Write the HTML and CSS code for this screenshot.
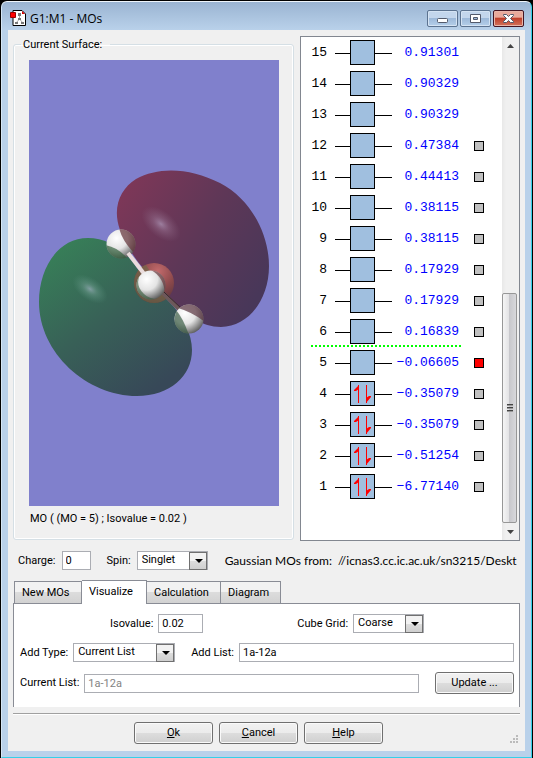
FILE: index.html
```html
<!DOCTYPE html>
<html lang="en">
<head>
<meta charset="UTF-8">
<title>G1:M1 - MOs</title>
<link rel="stylesheet" href="styles.css">
</head>
<body>
<svg class="defs" width="0" height="0">
    <symbol id="empty" viewBox="0 0 57 25">
        <path d="M0 13.5H57" stroke="#000" fill="none"/>
        <rect x="15.5" y="0.5" width="24" height="24" fill="#a0bfdf" stroke="#000"/>
    </symbol>
    <symbol id="filled" viewBox="0 0 57 25">
        <path d="M0 13.5H57" stroke="#000" fill="none"/>
        <rect x="15.5" y="0.5" width="24" height="24" fill="#a0bfdf" stroke="#000"/>
        <path d="M23.5 22V4M31.5 4V22" stroke="#f00" fill="none"/>
        <path d="M24 4V8L21 10H19V9ZM31 22V17L34 15H36V16Z" fill="#f00"/>
    </symbol>
</svg>
<div class="window">
    <header class="titlebar">
        <svg class="app-icon" width="16" height="17" viewBox="0 0 16 17">
            <path d="M3 .5H12L15.500 4V15.500H3Z" fill="#fff" stroke="#000"/>
            <path d="M12 1L15 4H12Z" fill="#d00"/>
            <path d="M9.500 5V9L6 13M9.500 9L13 13" fill="none" stroke="#aaa"/>
            <path d="M8 3h3v3H8zM8 8h3v2H8zM5 12h3v2H5zM11 12h3v2h-3z" fill="#777"/>
            <path d="M.5 2.500H5.500V7.500H.5Z" fill="#f00" stroke="#900"/>
        </svg>
        <h1>G1:M1 - MOs</h1>
        <div class="win-btns">
            <button aria-label="Minimize"><svg width="13" height="11" viewBox="0 0 13 11"><rect x="1.500" y="5.500" width="10" height="4" rx="1" fill="#fff" stroke="#535a6b"/></svg></button>
            <button aria-label="Maximize"><svg width="13" height="11" viewBox="0 0 13 11"><path fill-rule="evenodd" d="M1.500 1.500h10v8h-10zM4.500 4.500v2h4v-2z" fill="#fff" stroke="#535a6b"/></svg></button>
            <button class="close" aria-label="Close"><svg width="13" height="11" viewBox="0 0 13 11"><path d="M1.500 1.500h3l2 2 2-2h3v1l-3 3 3 3v1h-3l-2-2-2 2h-3v-1l3-3-3-3z" fill="#fff" stroke="#535a6b"/></svg></button>
        </div>
    </header>
    <main class="client">
        <div class="top">
            <fieldset class="surface">
                <legend>Current Surface:</legend>
                <svg class="view" viewBox="29 60 250 446" preserveAspectRatio="xMidYMid slice">
                    <defs>
                        <linearGradient id="red" x1="0" y1="0" x2="1" y2="0.7">
                            <stop offset="0" stop-color="#833758"/><stop offset="0.55" stop-color="#5e3757"/><stop offset="1" stop-color="#483759"/>
                        </linearGradient>
                        <linearGradient id="green" x1="0" y1="0" x2="0.7" y2="1">
                            <stop offset="0" stop-color="#378558"/><stop offset="0.55" stop-color="#386057"/><stop offset="1" stop-color="#374858"/>
                        </linearGradient>
                        <radialGradient id="shine"><stop offset="0" stop-color="#a58bab" stop-opacity="0.85"/><stop offset="0.4" stop-color="#94708f" stop-opacity="0.5"/><stop offset="1" stop-color="#84607c" stop-opacity="0"/></radialGradient>
                        <radialGradient id="shine-green"><stop offset="0" stop-color="#8aa3aa" stop-opacity="0.9"/><stop offset="0.4" stop-color="#6c9a8c" stop-opacity="0.5"/><stop offset="1" stop-color="#55907a" stop-opacity="0"/></radialGradient>
                        <radialGradient id="white" cx="0.35" cy="0.3" r="0.75">
                            <stop offset="0" stop-color="#fff"/><stop offset="0.5" stop-color="#e4e4e4"/><stop offset="1" stop-color="#5c5c5c"/>
                        </radialGradient>
                        <radialGradient id="boron" cx="0.6" cy="0.2" r="0.8">
                            <stop offset="0" stop-color="#c26a6c"/><stop offset="0.5" stop-color="#8e4a4c"/><stop offset="1" stop-color="#57353c"/>
                        </radialGradient>
                        <clipPath id="upper"><circle cx="121" cy="244" r="14.500"/></clipPath>
                        <clipPath id="lower"><circle cx="189" cy="319" r="14.500"/></clipPath>
                        <clipPath id="front"><circle cx="151" cy="285" r="14.500"/></clipPath>
                        <clipPath id="middle"><circle cx="154" cy="283" r="20"/></clipPath>
                    </defs>
                    <rect x="-500" y="-500" width="2000" height="2000" fill="#8080cc"/>
                    <path fill="url(#red)" d="M120 230C112 208 120 189 136 179C159 166 191 168 220 183C251 199 269 234 269 266C269 300 248 327 221 327C211 327 203 324 196 320C184 314 173 304 163 292L138 262C131 252 124 242 120 230Z"/>
                    <path fill="url(#green)" d="M88 238C58 238 39 268 39 302C39 353 87 396 137 396C170 396 192 376 192 350C192 334 183 318 174 307L137 268C126 250 108 238 88 238Z"/>
                    <ellipse cx="161" cy="224" rx="23" ry="13" transform="rotate(40 161 224)" fill="url(#shine)"/>
                    <ellipse cx="90" cy="289" rx="20" ry="11" transform="rotate(35 90 289)" fill="url(#shine-green)"/>
                    <circle cx="154" cy="283" r="20" fill="url(#boron)"/>
                    <path clip-path="url(#middle)" d="M130 262H144L172 305L130 308Z" fill="#6e6a48" fill-opacity="0.65"/>
                    <path d="M163 293L182 312" stroke="#6d585a" stroke-width="4"/>
                    <path d="M164 292L183 310" stroke="#36242b"/>
                    <circle cx="121" cy="244" r="14.500" fill="url(#white)"/>
                    <g clip-path="url(#upper)">
                        <path d="M119 228Q122 240 133 252L140 260V225Z" fill="#633238" fill-opacity="0.7"/>
                        <path d="M105 245Q118 247 128 259L120 262H105Z" fill="#295a34" fill-opacity="0.65"/>
                    </g>
                    <circle cx="189" cy="319" r="14.500" fill="url(#white)"/>
                    <g clip-path="url(#lower)">
                        <path d="M178 308Q192 312 205 322V300H178Z" fill="#5a3540" fill-opacity="0.7"/>
                        <path d="M176 310Q183 318 189 335H172Z" fill="#2f553a" fill-opacity="0.65"/>
                    </g>
                    <path d="M128 253L145 275" stroke="#eadcdc" stroke-width="4"/>
                    <circle cx="151" cy="285" r="14.500" fill="url(#white)"/>
                    <g clip-path="url(#front)">
                        <path d="M141 272Q134 285 144 294Q149 299 158 299L150 304H132V270Z" fill="#345a38" fill-opacity="0.6"/>
                        <path d="M149 269Q164 276 165 294L170 290V266Z" fill="#683238" fill-opacity="0.65"/>
                    </g>
                </svg>
                <p>MO ( (MO = 5) ; Isovalue = 0.02 )</p>
            </fieldset>
            <section class="levels">
                <table>
                    <tr><th>15</th><td class="box"><svg><use href="#empty"/></svg></td><td class="energy">0.91301</td><td class="mark"></td></tr>
                    <tr><th>14</th><td class="box"><svg><use href="#empty"/></svg></td><td class="energy">0.90329</td><td class="mark"></td></tr>
                    <tr><th>13</th><td class="box"><svg><use href="#empty"/></svg></td><td class="energy">0.90329</td><td class="mark"></td></tr>
                    <tr><th>12</th><td class="box"><svg><use href="#empty"/></svg></td><td class="energy">0.47384</td><td class="mark"><input type="checkbox" aria-label="MO 12"></td></tr>
                    <tr><th>11</th><td class="box"><svg><use href="#empty"/></svg></td><td class="energy">0.44413</td><td class="mark"><input type="checkbox" aria-label="MO 11"></td></tr>
                    <tr><th>10</th><td class="box"><svg><use href="#empty"/></svg></td><td class="energy">0.38115</td><td class="mark"><input type="checkbox" aria-label="MO 10"></td></tr>
                    <tr><th>9</th><td class="box"><svg><use href="#empty"/></svg></td><td class="energy">0.38115</td><td class="mark"><input type="checkbox" aria-label="MO 9"></td></tr>
                    <tr><th>8</th><td class="box"><svg><use href="#empty"/></svg></td><td class="energy">0.17929</td><td class="mark"><input type="checkbox" aria-label="MO 8"></td></tr>
                    <tr><th>7</th><td class="box"><svg><use href="#empty"/></svg></td><td class="energy">0.17929</td><td class="mark"><input type="checkbox" aria-label="MO 7"></td></tr>
                    <tr class="lumo"><th>6</th><td class="box"><svg><use href="#empty"/></svg></td><td class="energy">0.16839</td><td class="mark"><input type="checkbox" aria-label="MO 6"></td></tr>
                    <tr><th>5</th><td class="box"><svg><use href="#empty"/></svg></td><td class="energy">−0.06605</td><td class="mark"><input type="checkbox" aria-label="MO 5" checked></td></tr>
                    <tr><th>4</th><td class="box"><svg><use href="#filled"/></svg></td><td class="energy">−0.35079</td><td class="mark"><input type="checkbox" aria-label="MO 4"></td></tr>
                    <tr><th>3</th><td class="box"><svg><use href="#filled"/></svg></td><td class="energy">−0.35079</td><td class="mark"><input type="checkbox" aria-label="MO 3"></td></tr>
                    <tr><th>2</th><td class="box"><svg><use href="#filled"/></svg></td><td class="energy">−0.51254</td><td class="mark"><input type="checkbox" aria-label="MO 2"></td></tr>
                    <tr><th>1</th><td class="box"><svg><use href="#filled"/></svg></td><td class="energy">−6.77140</td><td class="mark"><input type="checkbox" aria-label="MO 1"></td></tr>
                </table>
                <div class="scrollbar">
                    <button aria-label="Scroll up"><svg width="7" height="4"><path d="M0 4L3.500 0L7 4Z" fill="#444"/></svg></button>
                    <div class="track"><div class="thumb"><i></i><i></i><i></i></div></div>
                    <button aria-label="Scroll down"><svg width="7" height="4"><path d="M0 0L3.500 4L7 0Z" fill="#444"/></svg></button>
                </div>
            </section>
        </div>
        <div class="row info">
            <label for="charge">Charge:</label>
            <input type="text" id="charge" class="w-charge" value="0">
            <label for="spin" class="l-spin">Spin:</label>
            <span class="select w-short"><select id="spin"><option>Singlet</option></select></span>
            <span class="source">Gaussian MOs from:&nbsp; //icnas3.cc.ic.ac.uk/sn3215/Deskt</span>
        </div>
        <nav class="tabs">
            <button>New MOs</button>
            <button class="active">Visualize</button>
            <button class="wide">Calculation</button>
            <button>Diagram</button>
        </nav>
        <section class="panel">
            <div class="row iso">
                <label for="iso">Isovalue:</label>
                <input type="text" id="iso" class="w-iso" value="0.02">
                <label for="cube" class="l-cube">Cube Grid:</label>
                <span class="select w-short"><select id="cube"><option>Coarse</option></select></span>
            </div>
            <div class="row">
                <label for="type">Add Type:</label>
                <span class="select w-type"><select id="type"><option>Current List</option></select></span>
                <label for="add" class="l-add">Add List:</label>
                <input type="text" id="add" class="grow" value="1a-12a">
            </div>
            <div class="row">
                <label for="list">Current List:</label>
                <input type="text" id="list" class="grow" value="1a-12a" disabled>
                <button class="btn update">Update ...</button>
            </div>
        </section>
        <footer class="footer">
            <button class="btn"><u>O</u>k</button>
            <button class="btn"><u>C</u>ancel</button>
            <button class="btn"><u>H</u>elp</button>
            <svg class="grip" width="9" height="9"><path d="M7 0h2v2H7zM7 3h2v2H7zM4 3h2v2H4zM7 6h2v2H7zM4 6h2v2H4zM1 6h2v2H1z" fill="#bbb"/></svg>
        </footer>
    </main>
</div>
</body>
</html>
```
FILE: styles.css
```css
*{
    box-sizing: border-box;
}
body{
    margin: 0;
    background: #000;
    font: 11px/14px Roboto, "Liberation Sans", sans-serif;
    color: #000;
}
button, input, select{
    margin: 0;
    font: inherit;
    color: inherit;
}
.defs{
    display: block;
}
.window{
    margin: 1px;
    padding: 0 6px 6px;
    border: 1px solid #35d0e8;
    border-left-color: #d5e6f5;
    border-top-color: #eef5fb;
    border-radius: 6px 6px 0 0;
    background: linear-gradient(#9ab4d2, #b9d1ea 28px);
}
.titlebar{
    display: flex;
    align-items: center;
    height: 28px;
    padding: 5px 0 0 2px;
}
.titlebar h1{
    flex: 1;
    margin: 0 0 0 4px;
    font: 12px/16px "Open Sans", sans-serif;
}
.win-btns{
    display: flex;
    gap: 2px;
    padding-right: 1px;
}
.win-btns button{
    display: flex;
    align-items: center;
    justify-content: center;
    width: 31px;
    height: 17px;
    padding: 0;
    border: 1px solid #5c7390;
    border-radius: 2px;
    background: linear-gradient(#c3d6ec 50%, #9db9d9 50%, #b5cfea);
    box-shadow: inset 0 0 0 1px #d4e3f3;
}
.win-btns .close{
    border-color: #431422;
    background: linear-gradient(#e9a99b 40%, #c0402b 50%, #d3735c);
    box-shadow: inset 0 0 0 1px #e8b5a9;
}
.client{
    padding: 6px 5px 7px;
    background: #f0f0f0;
}
.top{
    display: flex;
    gap: 6px;
    height: 505px;
}
.surface{
    display: flex;
    flex-direction: column;
    flex: 1;
    min-width: 0;
    margin: 0 0 1px;
    padding: 8px 14px 13px 15px;
    border: 1px solid #d5dfe5;
    border-radius: 3px;
    box-shadow: inset 0 0 0 1px #fff;
}
.surface legend{
    margin-left: -8px;
    padding: 2px 8px 0 2px;
}
.view{
    flex: 1;
    width: 100%;
    min-height: 0;
}
.surface p{
    margin: 6px 1px 0;
}
.levels{
    display: flex;
    justify-content: space-between;
    width: 220px;
    border: 1px solid #828790;
    background: #fff;
}
.levels table{
    align-self: flex-start;
    margin-left: 10px;
    border-collapse: collapse;
    font: 13px/16px "Liberation Mono", monospace;
}
.levels tr{
    height: 31px;
}
.levels th, .levels td{
    padding: 0;
    font-weight: normal;
    text-align: right;
}
.levels th{
    width: 16px;
}
.levels .box{
    width: 65px;
}
.box svg{
    display: block;
    width: 57px;
    height: 25px;
    margin-left: auto;
}
.levels .energy{
    width: 67px;
    color: #00f;
}
.levels .mark{
    width: 25px;
}
.levels input{
    display: block;
    appearance: none;
    width: 10px;
    height: 10px;
    margin-left: auto;
    border: 1px solid #000;
    background: #c0c0c0;
}
.levels input:checked{
    background: #f00;
}
.lumo{
    background: repeating-linear-gradient(90deg, #0f0 0 2px, #fff 2px 4px) 0 100% / 152px 2px no-repeat;
}
.scrollbar{
    display: flex;
    flex-direction: column;
    width: 17px;
    background: linear-gradient(90deg, #e8e8e8, #f0f0f0 4px);
}
.scrollbar button{
    display: flex;
    align-items: center;
    justify-content: center;
    height: 17px;
    padding: 0;
    border: 0;
    background: none;
}
.track{
    display: flex;
    flex: 1;
    align-items: flex-end;
}
.thumb{
    display: flex;
    flex-direction: column;
    align-items: center;
    justify-content: center;
    gap: 1px;
    width: 15px;
    height: 49%;
    border: 1px solid #979797;
    border-radius: 2px;
    background: linear-gradient(90deg, #f5f5f5, #e3e3e5 45%, #c8c8cc 50%, #d8d8db);
}
.thumb i{
    width: 6px;
    height: 2px;
    border-top: 1px solid #444;
    background: #999;
}
.row{
    display: flex;
    align-items: center;
}
.row label{
    margin-right: 5px;
}
.row input{
    min-width: 0;
    height: 19px;
    padding: 0 3px;
    border: 1px solid #abadb3;
    background: #fff;
}
.row input:disabled{
    color: #838383;
}
.row .grow{
    flex: 1;
}
.select{
    position: relative;
    flex-shrink: 0;
}
.select select{
    display: block;
    appearance: none;
    width: 100%;
    height: 19px;
    padding: 0 18px 2px 4px;
    border: 1px solid #abadb3;
    border-radius: 0;
    background: #fff;
}
.select::before{
    content: "";
    position: absolute;
    top: 1px;
    right: 1px;
    width: 16px;
    height: 16px;
    border: 1px solid #707070;
    background: linear-gradient(#f2f2f2 50%, #ddd 50%, #cfcfcf);
    pointer-events: none;
}
.select::after{
    content: "";
    position: absolute;
    top: 8px;
    right: 5px;
    border: 4px solid transparent;
    border-top-color: #000;
    border-bottom: 0;
    pointer-events: none;
}
.w-charge{
    width: 29px;
}
.w-short{
    width: 71px;
}
.w-type{
    width: 102px;
}
.w-iso{
    width: 45px;
}
.info{
    margin-top: 10px;
    padding-left: 5px;
}
.info label{
    margin-right: 6px;
}
.row .l-spin, .row .l-add{
    margin-left: 16px;
}
.row .l-cube{
    margin-left: 94px;
}
.source{
    flex: 1;
    margin-left: 17px;
    font: 12px/16px Lato, sans-serif;
    white-space: nowrap;
}
.tabs{
    display: flex;
    align-items: flex-end;
    margin-top: 10px;
    padding-left: 1px;
}
.tabs button{
    min-width: 60px;
    height: 22px;
    padding: 0 7px;
    border: 1px solid #898c95;
    border-bottom: 0;
    background: linear-gradient(#f2f2f2 45%, #dcdcdc 50%, #d2d2d2);
    text-align: left;
}
.tabs button:first-child{
    min-width: 68px;
}
.tabs button + button{
    border-left: 0;
}
.tabs .wide{
    min-width: 74px;
}
.tabs .active{
    min-width: 65px;
    height: 24px;
    margin-bottom: -1px;
    padding-bottom: 2px;
    background: #fff;
}
.panel{
    display: flex;
    flex-direction: column;
    gap: 10px;
    height: 104px;
    padding: 10px 5px 0 6px;
    border: 1px solid #898c95;
    border-bottom: 0;
    background: #fff;
}
.panel .iso{
    padding-left: 90px;
}
.btn{
    width: 79px;
    height: 22px;
    padding: 0;
    border: 1px solid #707070;
    border-radius: 3px;
    background: linear-gradient(#f2f2f2, #ebebeb 50%, #ddd 50%, #cfcfcf);
    box-shadow: inset 0 0 0 1px #fafafa;
}
.update{
    margin-left: 16px;
}
.footer{
    position: relative;
    display: flex;
    justify-content: center;
    gap: 6px;
    margin-top: 6px;
    padding: 8px 16px 0 0;
    border-top: 1px solid #a0a0a0;
    box-shadow: inset 0 1px #fff;
}
.grip{
    position: absolute;
    right: 2px;
    bottom: 0;
}
```
